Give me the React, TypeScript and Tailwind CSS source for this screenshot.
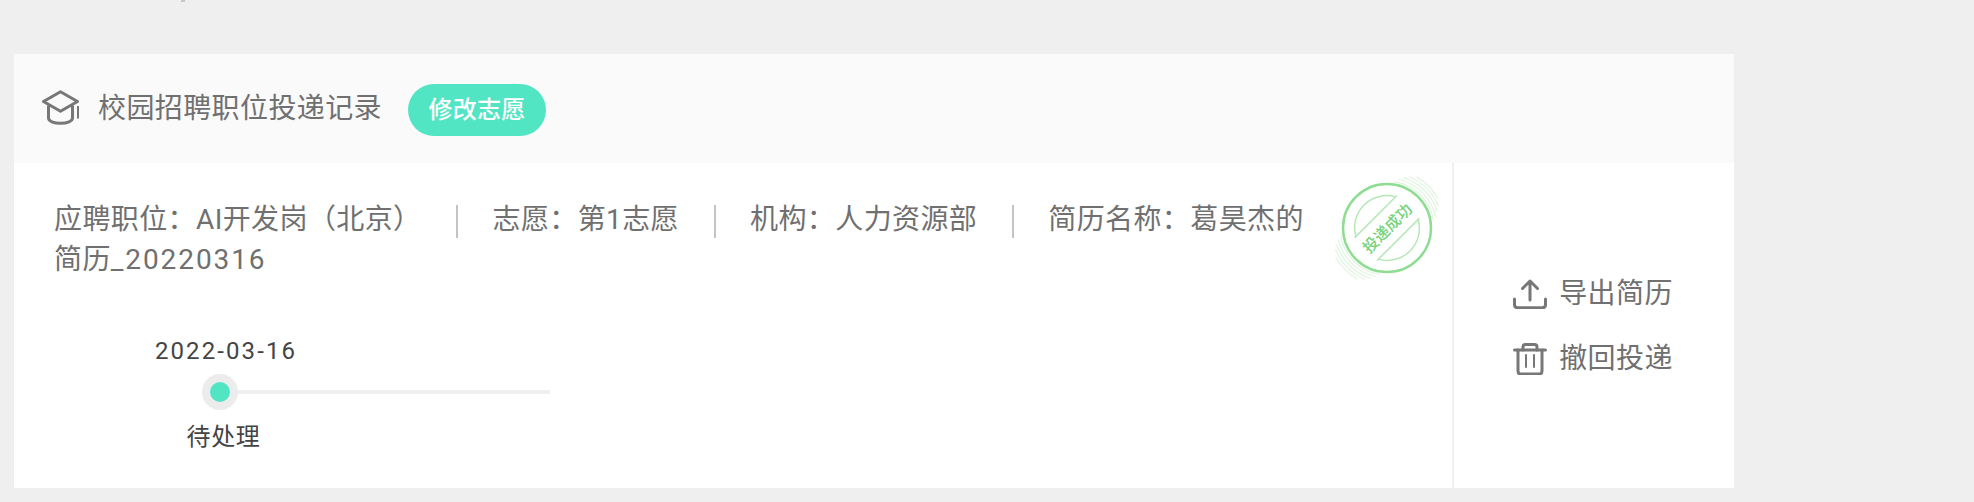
import React from 'react';

const FONT = "font-['Roboto','Noto_Sans_CJK_SC',sans-serif]";

const CapIcon = () => (
  <svg viewBox="0 0 38 35" className="w-[38px] h-[35px] shrink-0 -mt-[2px]" fill="none" stroke="#777" strokeWidth="3" strokeLinejoin="round">
    <path d="M18.500 1.700 35.500 11.500 18.500 21.300 1.500 11.500Z" />
    <path d="M6.500 15.500v12.500c0 3 5 5.300 12 5.300s12-2.300 12-5.300V15.500" />
    <path d="M36 16v12.500" strokeWidth="2" />
  </svg>
);

const UploadIcon = () => (
  <svg viewBox="0 0 34 30" className="w-[34px] h-[30px] shrink-0" fill="none" stroke="#777" strokeWidth="3" strokeLinecap="round" strokeLinejoin="round">
    <path d="M17 21V2M9.500 9.500 17 2l7.500 7.500" />
    <path d="M1.500 20v5.500c0 2 1.500 3.200 3.200 3.200h24.600c1.700 0 3.200-1.200 3.200-3.200V20" />
  </svg>
);

const TrashIcon = () => (
  <svg viewBox="0 0 34 32" className="w-[34px] h-8 shrink-0" fill="none" stroke="#777" strokeWidth="3" strokeLinecap="round" strokeLinejoin="round">
    <path d="M1.500 7h31" />
    <path d="M10 7V4c0-1.500 1-2.500 2.500-2.500h9C23 1.500 24 2.500 24 4v3" />
    <path d="M5 7v21c0 2 1 3 3 3h18c2 0 3-1 3-3V7" />
    <path d="M13 12v12M21 12v12" strokeWidth="2" />
  </svg>
);

// arc of radius r around the stamp centre, mid is the angle of its middle in the band's frame
const arc = (r: number, half: number, mid: number) => {
  const pt = (deg: number) => {
    const a = ((deg - 90) * Math.PI) / 180;
    return `${(65 + r * Math.cos(a)).toFixed(1)} ${(65 + r * Math.sin(a)).toFixed(1)}`;
  };
  return `M${pt(mid - half)}A${r} ${r} 0 0 1 ${pt(mid + half)}`;
};

const HATCH = [
  [47, 36],
  [50, 32],
  [53, 27],
  [56, 22],
  [59, 15],
];

// 投递成功 stamp, rotated band with hatching at both ends of the band
const Stamp = () => (
  <svg viewBox="0 0 130 130" className="absolute left-[-65px] top-[-65px] w-[130px] h-[130px]" fill="none">
    <g transform="rotate(-45 65 65)">
      <g stroke="#e0f5e0" strokeWidth="1.200">
        {HATCH.map(([r, half]) => (
          <path key={`t${r}`} d={arc(r, half, 90)} />
        ))}
        {HATCH.map(([r, half]) => (
          <path key={`b${r}`} d={arc(r, half, 270)} />
        ))}
      </g>
      <circle cx="65" cy="65" r="44" stroke="#8fdc93" strokeWidth="2.500" />
      <path d="M37 49A32 32 0 0 1 93 49" stroke="#b5e8b7" strokeWidth="1.500" />
      <path d="M37 81A32 32 0 0 0 93 81" stroke="#b5e8b7" strokeWidth="1.500" />
      <path d="M35 49H95M35 81H95" stroke="#b5e8b7" strokeWidth="1.500" />
      <text x="65" y="71" textAnchor="middle" fontSize="15.500" fontWeight="500" fill="#74d27b" fontFamily="'Noto Sans CJK SC',sans-serif">
        投递成功
      </text>
    </g>
  </svg>
);

const Divider = () => <span className="inline-block w-0.5 h-[33px] bg-[#c4c4c4] align-middle ml-[35px] mr-[34px]" />;

export default function App() {
  return (
    <div className={`${FONT} h-[502px] overflow-hidden bg-[#efefef] w-[1974px]`}>
      <div className="h-0.5 w-1 ml-[181px] bg-[#c8c8c8]" />
      <div className="w-[1720px] h-[434px] mt-[52px] ml-3.5 flex flex-col bg-white">
        <div className="h-[109px] shrink-0 bg-[#fafafa] flex items-center pl-7">
          <CapIcon />
          <span className="ml-[18px] text-[28px] tracking-[0.4px] text-[#707070]">校园招聘职位投递记录</span>
          <button className="ml-[26px] mt-0.5 w-[138px] h-[52px] rounded-full bg-[#52e5c3] text-white text-2xl tracking-[0.3px] font-medium">修改志愿</button>
        </div>

        <div className="flex-1 flex min-h-0">
          <div className="relative flex-1 pl-10 pr-[130px] pt-[37px]">
            <p className="text-[28px] leading-10 tracking-[0.4px] text-[#707070]">
              <span>应聘职位：AI开发岗（北京）</span>
              <Divider />
              <span>志愿：第1志愿</span>
              <Divider />
              <span>机构：人力资源部</span>
              <Divider />
              <span>
                简历名称：葛昊杰的简历<span className="tracking-[1.9px]">_20220316</span>
              </span>
            </p>

            <div className="absolute left-[1373px] top-[65px]">
              <Stamp />
            </div>

            <div className="mt-[55px] ml-[99px] w-[397px] text-2xl text-[#444]">
              <div className="w-[146px] text-center leading-8 tracking-[2.1px]">2022-03-16</div>
              <div className="flex items-center mt-[7px] ml-[49px]">
                <span className="w-9 h-9 rounded-full bg-[#ececec] flex items-center justify-center shrink-0">
                  <span className="w-5 h-5 rounded-full bg-[#52e5c3]" />
                </span>
                <span className="flex-1 h-1 bg-[#efefef]" />
              </div>
              <div className="w-[141px] text-center leading-8 mt-[11px] tracking-[0.7px]">待处理</div>
            </div>
          </div>

          <div className="w-[282px] shrink-0 border-l-2 border-[#f0f0f0] flex flex-col items-center justify-center gap-[35px] pt-[2px] pr-[2px] text-[28px] tracking-[0.4px] text-[#707070]">
            <div className="flex items-center gap-3 h-[30px]">
              <UploadIcon />
              <span>导出简历</span>
            </div>
            <div className="flex items-center gap-3 h-[30px]">
              <TrashIcon />
              <span>撤回投递</span>
            </div>
          </div>
        </div>
      </div>
    </div>
  );
}
